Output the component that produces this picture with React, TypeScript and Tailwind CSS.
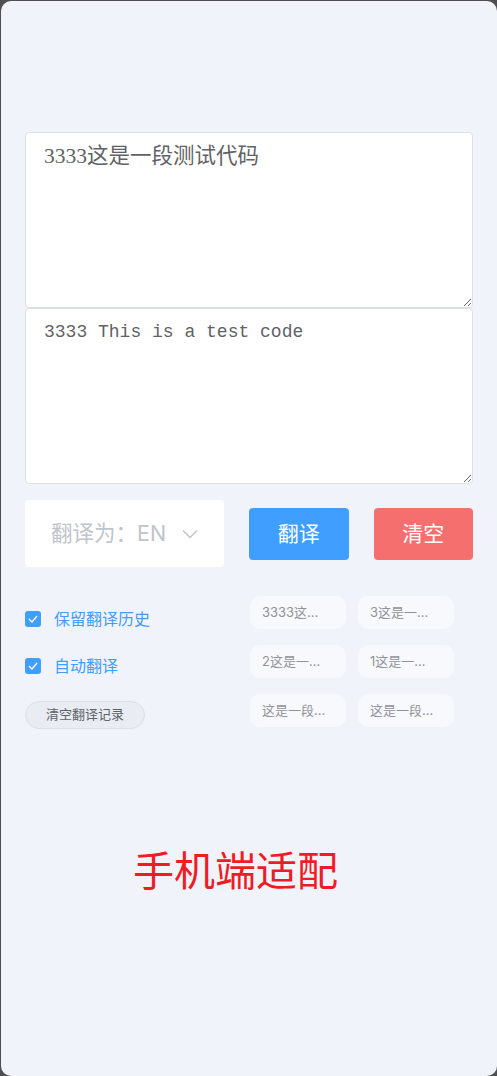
import React from "react"

const history = ["3333这...", "3这是一...", "2这是一...", "1这是一...", "这是一段...", "这是一段..."]

const sans = "font-['Inter','Noto_Sans_CJK_SC',sans-serif]"

function Check() {
  return (
    <span className="flex h-4 w-4 items-center justify-center rounded-[3px] bg-[#409eff]">
      <svg width="10" height="8" viewBox="0 0 10 8" fill="none">
        <path d="M1 4l3 3 5-6" stroke="white" strokeWidth="1.4" />
      </svg>
    </span>
  )
}

export default function App() {
  return (
    <div className="w-[497px] h-[1076px] bg-[#4f4f52] pl-px pt-px overflow-hidden">
      <div className={`w-[496px] h-[1075px] rounded-[10px] bg-[#f0f3fa] px-6 pt-[131px] ${sans}`}>
        <textarea
          readOnly
          value="3333这是一段测试代码"
          className="block w-[448px] h-[176px] rounded border border-[#dcdfe6] bg-white px-[18px] pt-[9px] text-[21.5px] leading-[28px] text-[#606266] outline-none font-['Liberation_Serif','Noto_Sans_CJK_SC',serif]"
        />
        <textarea
          readOnly
          value="3333 This is a test code"
          className="block w-[448px] h-[176px] rounded border border-[#dcdfe6] bg-white px-[18px] pt-[9px] text-[18px] leading-[28px] text-[#606266] outline-none font-['Liberation_Mono','Noto_Sans_CJK_SC',monospace]"
        />

        <div className="mt-4 flex items-center gap-[25px]">
          <div className="flex h-[67px] w-[200px] items-center rounded bg-white pl-[26px] text-[21.5px] text-[#c0c4cc]">
            <span>翻译为：EN</span>
            <svg className="ml-[16px]" width="16" height="10" viewBox="0 0 16 10" fill="none">
              <path d="M1 1.5l7 7 7-7" stroke="#c0c4cc" strokeWidth="1.5" />
            </svg>
          </div>
          <button className="h-[52px] w-[100px] rounded bg-[#409eff] text-[21px] text-white">翻译</button>
          <button className="h-[52px] w-[100px] rounded bg-[#f56f6f] text-[21px] text-white">清空</button>
        </div>

        <div className="mt-[29px] flex items-start gap-[25px]">
          <div className="w-[200px]">
            <label className="mt-[11px] flex items-center gap-[13px] text-[16px] text-[#409eff]">
              <Check />
              保留翻译历史
            </label>
            <label className="mt-[23px] flex items-center gap-[13px] text-[16px] text-[#409eff]">
              <Check />
              自动翻译
            </label>
            <button className="mt-[23px] h-[28px] w-[120px] rounded-full border border-[#dcdfe6] bg-[#e9ecf3] text-[13px] text-[#606266]">
              清空翻译记录
            </button>
          </div>
          <div className="grid grid-cols-[96px_96px] content-start gap-x-3 gap-y-4">
            {history.map((h, i) => (
              <div key={i} className="flex h-[33px] items-center rounded-[10px] bg-[#f8f9fd] pl-3 text-[13px] text-[#909399]">
                {h}
              </div>
            ))}
          </div>
        </div>

        <div className="mt-[118px] pl-[108px] text-[41px] leading-[48px] text-[#ee1c25]">手机端适配</div>
      </div>
    </div>
  )
}
